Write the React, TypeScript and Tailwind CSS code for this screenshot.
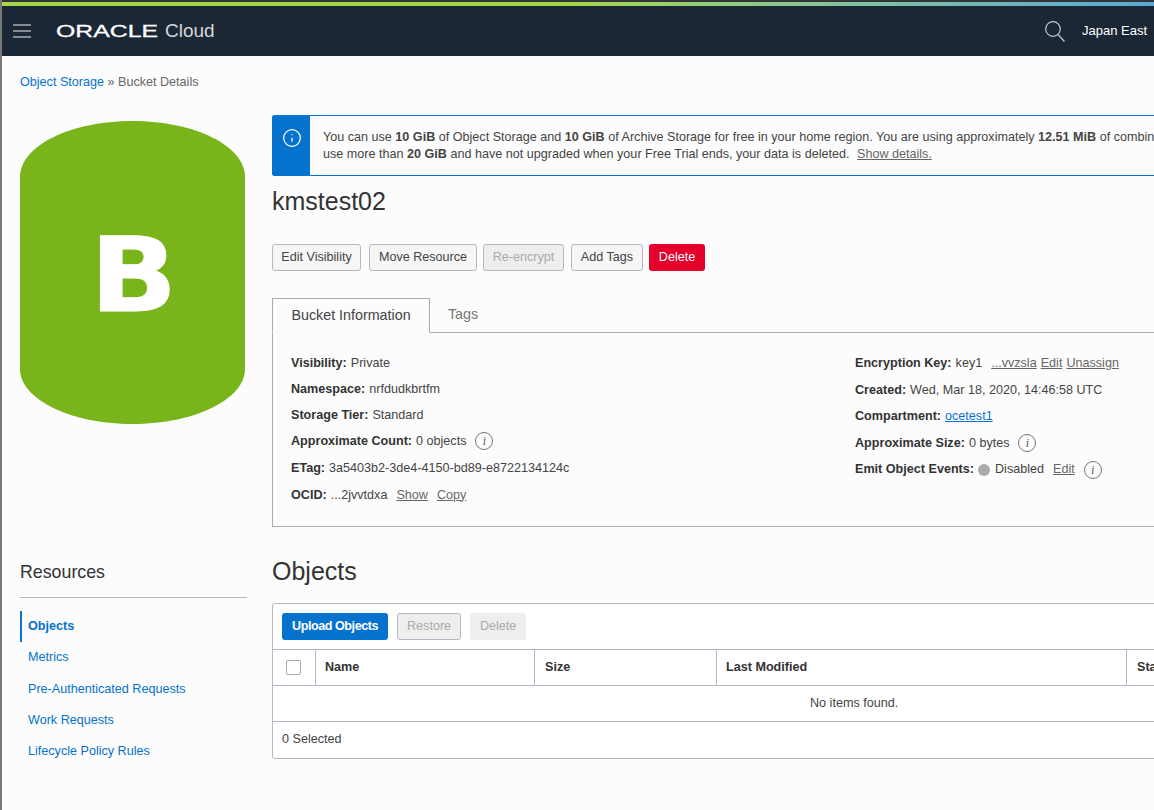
import { Info } from 'lucide-react'

const font = "font-['Liberation_Sans',Arial,sans-serif]"

function Hint() {
  return (
    <span className="ml-[9px] inline-flex h-[18px] w-[18px] items-center justify-center rounded-full border border-[#777] font-['Liberation_Serif',serif] text-[12px] italic leading-none text-[#555]">
      i
    </span>
  )
}

function Field({ label, tall, children }: { label: string; tall?: boolean; children: React.ReactNode }) {
  return (
    <div className={tall ? 'flex h-[28px] items-center whitespace-nowrap' : 'flex h-[26px] items-center whitespace-nowrap'}>
      <b className="mr-1 font-bold text-[#333]">{label}</b>
      {children}
    </div>
  )
}

function RightField({ label, children }: { label: string; children: React.ReactNode }) {
  return (
    <div className="flex h-[26.5px] items-center whitespace-nowrap">
      <b className="mr-1 font-bold text-[#333]">{label}</b>
      {children}
    </div>
  )
}

function Btn({ children, disabled, className }: { children: React.ReactNode; disabled?: boolean; className?: string }) {
  return (
    <button
      className={
        (disabled
          ? 'h-[27px] whitespace-nowrap rounded-[3px] border border-[#b4b8c4] bg-[#eeeeee] text-[#aaa] '
          : 'h-[27px] whitespace-nowrap rounded-[3px] border border-[#b4b8c4] bg-[#f6f6f6] text-[#444] ') + (className ?? '')
      }
    >
      {children}
    </button>
  )
}

export default function App() {
  return (
    <div className={`${font} h-[810px] w-[1154px] overflow-hidden border-l-2 border-[#777] bg-[#fcfcfc] text-[12.6px] text-[#444]`}>
      <div className="h-[2px] bg-[#333]" />
      <div className="h-1 bg-gradient-to-r from-[#a5d64c] via-[#a5d64c] to-[#5aa7d8]" />
      <header className="flex h-[50px] items-center bg-[#1c2735] pl-[11px] text-white">
        <svg viewBox="0 0 18 14" className="h-[14px] w-[18px]" fill="none" stroke="#a9adb3" strokeWidth="1.4">
          <path d="M0 1H18M0 7H18M0 13H18" />
        </svg>
        <span className="ml-[25px] inline-block w-[102px] origin-left scale-x-[1.46] text-[17px] leading-none [-webkit-text-stroke:0.3px_white]">
          ORACLE
        </span>
        <span className="ml-[7px] text-[19px] font-light text-[#d5d7da]">Cloud</span>
        <svg viewBox="0 0 20 21" className="ml-auto h-[21px] w-[20px]" fill="none" stroke="#c5c8cc" strokeWidth="1.2">
          <circle cx="8" cy="8" r="7.3" />
          <path d="M13 13.500L19.500 20.500" />
        </svg>
        <span className="ml-[17px] w-[72px] overflow-hidden whitespace-nowrap text-[13px]">Japan East</span>
      </header>
      <main className="flex pl-[18px]">
        <aside className="w-[227px] shrink-0">
          <div className="mt-[18px] whitespace-nowrap leading-[17px] text-[#666]">
            <a className="text-[#0572ce]">Object Storage</a> » Bucket Details
          </div>
          <div className="relative mt-[30px] h-[303px] w-[225px]">
            <svg viewBox="0 0 225 303" className="h-full w-full">
              <path d="M0 56C0 25 50 0 112.500 0S225 25 225 56V248C225 278 175 303 112.500 303S0 278 0 248Z" fill="#78b41a" />
            </svg>
            <span className="absolute left-[70px] top-[94px] origin-left scale-x-[1.1] font-['DejaVu_Sans',sans-serif] text-[104px] font-bold leading-[120px] text-white [-webkit-text-stroke:1px_white]">
              B
            </span>
          </div>
          <h2 className="mt-[136px] text-[17.8px] leading-[24px] text-[#333]">Resources</h2>
          <div className="mt-[13px] border-t border-[#b4b8c4]" />
          <nav className="mt-[13px] text-[#0572ce]">
            <a className="flex h-[31px] items-center border-l-2 border-[#0572ce] pl-[6px] font-bold">Objects</a>
            <a className="flex h-[31px] items-center pl-2">Metrics</a>
            <a className="flex h-[32px] items-center pl-2">Pre-Authenticated Requests</a>
            <a className="flex h-[31px] items-center pl-2">Work Requests</a>
            <a className="flex h-[31px] items-center pl-2">Lifecycle Policy Rules</a>
          </nav>
        </aside>
        <section className="ml-[25px] w-[900px] shrink-0">
          <div className="mt-[59px] flex h-[61px] rounded-[2px] border border-[#0572ce]">
            <div className="flex w-[37px] shrink-0 justify-center bg-[#0572ce] pt-[12px] text-white">
              <Info className="h-[20px] w-[20px]" strokeWidth={1.5} />
            </div>
            <div className="whitespace-nowrap pl-[13px] pt-[13px] leading-[17px] text-[#444]">
              <div>
                You can use <b>10 GiB</b> of Object Storage and <b>10 GiB</b> of Archive Storage for free in your home region. You are using approximately <b>12.51 MiB</b> of combined
              </div>
              <div>
                use more than <b>20 GiB</b> and have not upgraded when your Free Trial ends, your data is deleted. <a className="ml-1 text-[#666] underline">Show details.</a>
              </div>
            </div>
          </div>
          <h1 className="mt-[9px] text-[25px] leading-[32px] text-[#333]">kmstest02</h1>
          <div className="mt-[27px] flex gap-[6px]">
            <Btn className="mr-[2px] w-[89px]">Edit Visibility</Btn>
            <Btn className="w-[108px]">Move Resource</Btn>
            <Btn disabled className="mr-[1px] w-[81px]">Re-encrypt</Btn>
            <Btn className="w-[72px]">Add Tags</Btn>
            <button className="h-[27px] w-[56px] rounded-[3px] bg-[#e4002b] text-white">Delete</button>
          </div>
          <div className="mt-[27px] flex h-[35px] border-b border-[#aaa]">
            <div className="-mb-px flex w-[158px] items-center justify-center border border-[#aaa] border-b-[#fcfcfc] text-[14.3px]">
              Bucket Information
            </div>
            <div className="flex w-[66px] items-center justify-center pb-[1px] text-[14.3px] text-[#777]">Tags</div>
          </div>
          <div className="flex h-[194px] border-x border-b border-[#aaa] pl-[18px] pt-[17px]">
            <div className="w-[564px] shrink-0">
              <Field label="Visibility:">Private</Field>
              <Field label="Namespace:">nrfdudkbrtfm</Field>
              <Field label="Storage Tier:">Standard</Field>
              <Field label="Approximate Count:">0 objects<Hint /></Field>
              <Field label="ETag:" tall>3a5403b2-3de4-4150-bd89-e8722134124c</Field>
              <Field label="OCID:">
                ...2jvvtdxa
                <a className="ml-[9px] text-[#666] underline">Show</a>
                <a className="ml-[9px] text-[#666] underline">Copy</a>
              </Field>
            </div>
            <div className="pt-[0.25px]">
              <RightField label="Encryption Key:">
                key1
                <a className="ml-[9px] text-[#666] underline">...vvzsla</a>
                <a className="ml-[4px] text-[#666] underline">Edit</a>
                <a className="ml-[4px] text-[#666] underline">Unassign</a>
              </RightField>
              <RightField label="Created:">Wed, Mar 18, 2020, 14:46:58 UTC</RightField>
              <RightField label="Compartment:"><a className="text-[#0572ce] underline">ocetest1</a></RightField>
              <RightField label="Approximate Size:">0 bytes<Hint /></RightField>
              <RightField label="Emit Object Events:">
                <span className="mr-[5px] h-[12px] w-[12px] rounded-full bg-[#aaa]" />
                Disabled
                <a className="ml-[9px] text-[#666] underline">Edit</a>
                <Hint />
              </RightField>
            </div>
          </div>
          <h2 className="mt-[28px] text-[25px] leading-[32px] text-[#333]">Objects</h2>
          <div className="mt-[16px] rounded-[3px] border border-[#b4b8c4] bg-white">
            <div className="flex h-[45px] items-center gap-[9px] pl-[9px]">
              <button className="h-[27px] rounded-[3px] bg-[#0572ce] px-[10px] font-bold tracking-[-0.45px] text-white">Upload Objects</button>
              <Btn disabled className="w-[64px]">Restore</Btn>
              <button className="h-[27px] w-[56px] rounded-[3px] bg-[#eeeeee] text-[#aaa]">Delete</button>
            </div>
            <div className="grid h-[37px] grid-cols-[43px_219px_182px_410px_100px] border-y border-[#b4b8c4] font-bold text-[#333]">
              <div className="flex items-center justify-center border-r border-[#b4b8c4] pr-[2px]">
                <span className="h-[15px] w-[15px] rounded-[2px] border border-[#aaa] bg-white" />
              </div>
              <div className="flex items-center border-r border-[#b4b8c4] pl-[9px]">Name</div>
              <div className="flex items-center border-r border-[#b4b8c4] pl-[10px]">Size</div>
              <div className="flex items-center border-r border-[#b4b8c4] pl-[9px]">Last Modified</div>
              <div className="flex items-center pl-[10px]">Status</div>
            </div>
            <div className="flex h-[36px] items-center border-b border-[#b4b8c4] pl-[537px]">No items found.</div>
            <div className="flex h-[36px] items-center pb-[2px] pl-[9px]">0 Selected</div>
          </div>
        </section>
      </main>
    </div>
  )
}
